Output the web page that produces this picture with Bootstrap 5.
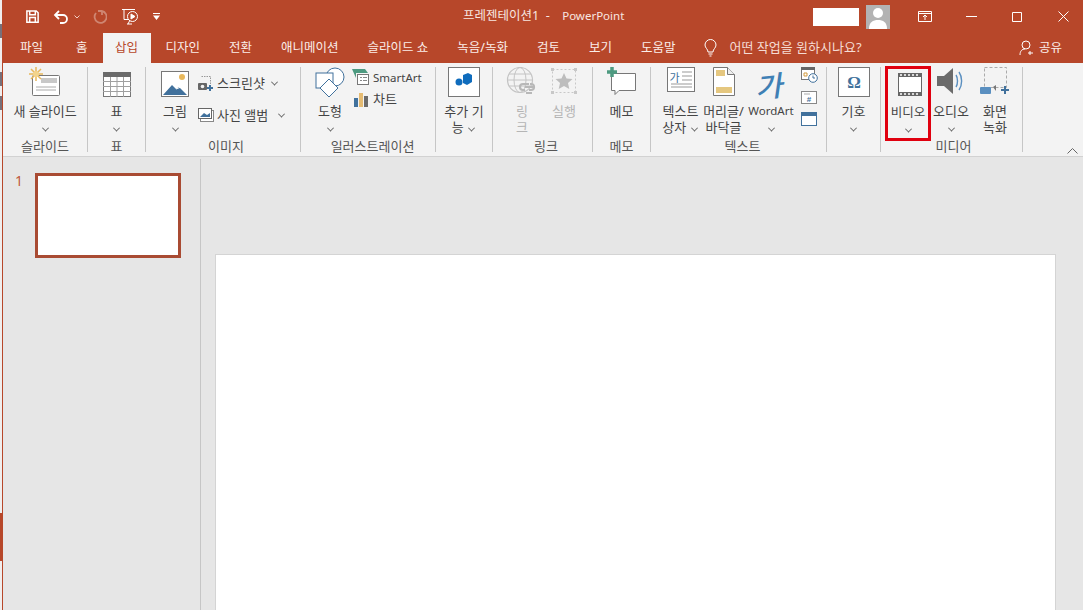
<!DOCTYPE html>
<html lang="ko">
<head>
  <meta charset="UTF-8" />
  <title>프레젠테이션1 - PowerPoint</title>
  <link href="https://cdn.jsdelivr.net/npm/bootstrap@5.3.0/dist/css/bootstrap.min.css" rel="stylesheet" />
  <style>
    html, body { height: 610px; overflow: hidden; }
    body { background: #f0eeee; font-family: "Noto Sans", "Noto Sans CJK KR", sans-serif; font-size: 13px; color: #444; }
    svg { display: block; }
    .bg-strip { width: 2px; height: 610px; flex: none; }
    .spot { height: 14px; margin-bottom: 10px; background: #77707a; }
    .spot-red { height: 48px; background: #b7472a; margin-top: 393px; }
    .app-frame { height: 610px; flex: 1; min-width: 0; background: #e6e6e6; border-left: 1px solid #b7472a; }
    .latin-text { font-size: 11.5px; }
    .title-row { height: 33px; flex: none; background: #b7472a; color: #fff; position: relative; }
    .qat { padding-left: 22px; }
    .qat-slot { width: 28px; }
    .qat-undo { width: 40px; }
    .qat-show { width: 32px; }
    .doc-title { position: absolute; left: 460px; top: 7px; font-size: 12.5px; line-height: 17px; color: #f7e6e0; white-space: pre; }
    .doc-title .latin-text { margin-left: 6px; }
    .account-box { width: 46px; height: 18px; background: #fff; }
    .avatar { width: 24px; height: 24px; background: #b3b3b3; margin-left: 7px; margin-right: 12px; }
    .win-btn { width: 46px; }
    .win-last { width: 40px; margin-left: 3px; }
    .tab-row { height: 30px; flex: none; background: #b7472a; padding-left: 3px; font-size: 12.5px; color: #fbeee9; }
    .rib-tab { padding: 0 14px; line-height: 30px; margin-right: 1px; white-space: nowrap; }
    .first-tab { margin-right: 5px; }
    .rib-tab-on { background: #f3f3f3; color: #b7472a; padding: 0 12.5px; margin-right: 1px; }
    .tell-me { margin-left: 13px; gap: 13px; color: #f5dcd4; font-size: 13px; }
    .share-link { margin-right: 21px; gap: 4px; color: #fbeee9; }
    .ribbon { height: 94px; flex: none; background: #f3f3f3; border-bottom: 1px solid #d2d2d2; padding-top: 4px; position: relative; }
    .rb-group { height: 85px; border-right: 1px solid #c6c6c6; flex: none; }
    .rb-items { height: 72px; }
    .rb-name { height: 13px; line-height: 14px; text-align: center; font-size: 13px; color: #555; white-space: nowrap; }
    .rb-btn { flex: none; line-height: 16px; text-align: center; color: #444; white-space: nowrap; }
    .rb-icon { height: 36px; }
    .wordart-glyph { font-family: "Noto Sans CJK KR", sans-serif; font-size: 29px; font-weight: 500; line-height: 34px; color: #3f80b5; transform: skewX(-14deg) rotate(-6deg); }
    .chev { display: inline-block; width: 5px; height: 5px; border: solid #666; border-width: 0 1px 1px 0; transform: rotate(45deg) translate(-1px, -1px); margin: 0 2px; }
    .rb-small { line-height: 16px; white-space: nowrap; gap: 3px; }
    .smart-col { margin-left: 2px; padding-top: 2px; }
    .chart-row { margin-top: 5px; }
    .dim-label { color: #b5b5b5; }
    .video-on { border: 3px solid #e0000f; height: 75px; margin-top: -1px; font-size: 12.5px; }
    .collapse-btn { position: absolute; right: 5px; bottom: 2px; }
    .g-w1 { width: 85px; } .g-w2 { width: 58px; } .g-w3 { width: 155px; padding-left: 6px; }
    .g-w4 { width: 135px; padding-left: 9px; } .g-w5 { width: 57px; } .g-w6 { width: 100px; padding-left: 7px; }
    .g-w7 { width: 58px; } .g-w8 { width: 176px; padding-left: 8px; } .g-w9 { width: 54px; } .g-w10 { width: 142px; padding-left: 4px; }
    .b-40 { width: 40px; } .b-42 { width: 43px; } .b-44 { width: 44px; } .b-46 { width: 46px; } .b-52 { width: 52px; } .b-full { width: 100%; }
    .main-row { min-height: 0; }
    .thumb-pane { width: 198px; border-right: 1px solid #c6c6c6; flex: none; margin-top: 2px; padding: 14px 0 0 12px; }
    .thumb-num { width: 20px; color: #c0583c; font-size: 14px; line-height: 16px; }
    .thumb-slide { width: 146px; height: 85px; background: #fff; border: 3px solid #a94b33; }
    .edit-area { flex: 1; padding: 97px 0 0 14px; overflow: hidden; }
    .slide-page { width: 841px; height: 400px; background: #fff; border: 1px solid #d4d4d4; }
  </style>
</head>
<body class="d-flex">
  <div class="bg-strip d-flex flex-column">
    <div class="spot mt-4"></div>
    <div class="spot mt-4"></div>
    <div class="spot"></div>
    <div class="spot-red"></div>
  </div>
  <div class="app-frame d-flex flex-column">
    <div class="title-row d-flex align-items-center">
      <div class="qat d-flex align-items-center">
        <div class="qat-slot">
          <svg width="15" height="15" viewBox="0 0 16 16" fill="none" stroke="#fff" stroke-width="1.600"><path d="M2 2h10l2 2v10H2z"/><path d="M5 2v4h6V2M5 14V9h6v5"/></svg>
        </div>
        <div class="qat-undo d-flex align-items-center">
          <svg width="17" height="14" viewBox="0 0 17 14" fill="none" stroke="#fff" stroke-width="1.800"><path d="M6 1 2 5l4 4"/><path d="M2 5h8a4 4 0 0 1 0 8H7"/></svg>
          <svg class="ms-1" width="6" height="4" viewBox="0 0 6 4" fill="none" stroke="#f2cfc4"><path d="m.5.5 2.500 2.500L5.500.5"/></svg>
        </div>
        <div class="qat-slot">
          <svg width="14" height="14" viewBox="0 0 14 14" fill="none" stroke="#cf8672" stroke-width="1.800"><path d="M9 1a6 6 0 1 1-6 2"/><path d="M9 1v4M9 1H5"/></svg>
        </div>
        <div class="qat-show">
          <svg width="18" height="17" viewBox="0 0 18 17" fill="none" stroke="#fff"><path d="M1 1.500h13M3 1.500v10h5M9 12l-2 4M6 16h5"/><circle cx="11.500" cy="8.500" r="5"/><path d="M10 6v5l4-2.500z" fill="#fff"/></svg>
        </div>
        <svg width="7" height="7" viewBox="0 0 7 7" fill="#fff"><path d="M0 0h7v1H0zM0 2.500h7L3.500 7z"/></svg>
      </div>
      <div class="doc-title">프레젠테이션1  -  <span class="latin-text">PowerPoint</span></div>
      <div class="ms-auto d-flex align-items-center">
        <div class="account-box"></div>
        <div class="avatar d-flex">
          <svg width="24" height="24" viewBox="0 0 24 24" fill="#fff"><circle cx="12" cy="8" r="5"/><path d="M3 24c0-7 4-9 9-9s9 2 9 9z"/></svg>
        </div>
        <div class="win-btn d-flex justify-content-center">
          <svg width="14" height="11" viewBox="0 0 14 11" fill="none" stroke="#fff"><path d="M.5.500h13v10H.500zM.5 2.500h13M7 9V4.500M5 6l2-2 2 2"/></svg>
        </div>
        <div class="win-btn d-flex justify-content-center">
          <svg width="11" height="1" viewBox="0 0 11 1"><path d="M0 0h11v1H0z" fill="#fff"/></svg>
        </div>
        <div class="win-btn d-flex justify-content-center">
          <svg width="10" height="10" viewBox="0 0 10 10" fill="none" stroke="#fff"><path d="M.5.500h9v9h-9z"/></svg>
        </div>
        <div class="win-last d-flex justify-content-center">
          <svg width="11" height="11" viewBox="0 0 11 11" fill="none" stroke="#fff"><path d="m.5.500 10 10M10.500.500l-10 10"/></svg>
        </div>
      </div>
    </div>

    <div class="tab-row d-flex align-items-center">
      <div class="rib-tab first-tab">파일</div>
      <div class="rib-tab">홈</div>
      <div class="rib-tab rib-tab-on">삽입</div>
      <div class="rib-tab">디자인</div>
      <div class="rib-tab">전환</div>
      <div class="rib-tab">애니메이션</div>
      <div class="rib-tab">슬라이드 쇼</div>
      <div class="rib-tab">녹음/녹화</div>
      <div class="rib-tab">검토</div>
      <div class="rib-tab">보기</div>
      <div class="rib-tab">도움말</div>
      <div class="tell-me d-flex align-items-center">
        <svg width="13" height="18" viewBox="0 0 13 18" fill="none" stroke="#fff"><path d="M4 13c0-3-3-4-3-7a5.500 5.500 0 0 1 11 0c0 3-3 4-3 7zM4.500 15h4M5.500 17h2"/></svg>
        <span>어떤 작업을 원하시나요?</span>
      </div>
      <div class="share-link ms-auto d-flex align-items-center">
        <svg width="16" height="16" viewBox="0 0 16 16" fill="none" stroke="#fff"><circle cx="7" cy="5" r="4"/><path d="M1 15c0-4 2-6 5-6M11 11v4M9 13h5"/></svg>
        <span>공유</span>
      </div>
    </div>

    <div class="ribbon d-flex">
      <div class="rb-group g-w1 d-flex flex-column">
        <div class="rb-items d-flex">
          <div class="rb-btn b-full">
            <div class="rb-icon d-flex justify-content-center">
              <svg width="32" height="30" viewBox="0 0 32 30"><rect x="3.500" y="8.500" width="27" height="20" rx="1" fill="#fff" stroke="#777"/><rect x="12" y="11" width="16" height="5" fill="#c8c8c8"/><path d="M7 20h20M7 23h20" stroke="#aaa"/><path d="M7 0v14M0 7h14M2 2l10 10M12 2 2 12" stroke="#e8b85c" stroke-width="1.500"/><circle cx="7" cy="7" r="3" fill="#f3d48c"/></svg>
            </div>
            <div>새 슬라이드</div>
            <div><span class="chev"></span></div>
          </div>
        </div>
        <div class="rb-name">슬라이드</div>
      </div>

      <div class="rb-group g-w2 d-flex flex-column">
        <div class="rb-items d-flex">
          <div class="rb-btn b-full">
            <div class="rb-icon d-flex justify-content-center">
              <svg width="28" height="30" viewBox="0 0 28 30"><rect x=".5" y="5.500" width="27" height="24" fill="#fff" stroke="#777"/><rect y="5" width="28" height="5" fill="#6b6b6b"/><path d="M0 14.500h28M0 19.500h28M0 24.500h28M7.500 10v20M14 10v20M20.500 10v20" stroke="#a0a0a0"/></svg>
            </div>
            <div>표</div>
            <div><span class="chev"></span></div>
          </div>
        </div>
        <div class="rb-name">표</div>
      </div>

      <div class="rb-group g-w3 d-flex flex-column">
        <div class="rb-items d-flex">
          <div class="rb-btn b-46">
            <div class="rb-icon d-flex justify-content-center">
              <svg width="28" height="30" viewBox="0 0 28 30"><rect x=".5" y="4.500" width="27" height="25" fill="#fff" stroke="#777"/><circle cx="21" cy="10" r="3" fill="#e8b85c"/><path d="M2 28 11 18l4 4 3-2 8 8z" fill="#41719c"/><path d="m15 22 5-2 6 6" stroke="#fff" fill="none"/></svg>
            </div>
            <div>그림</div>
            <div><span class="chev"></span></div>
          </div>
          <div class="d-flex flex-column">
            <div class="rb-small d-flex align-items-center mt-2">
              <svg width="16" height="16" viewBox="0 0 16 16" fill="none"><path d="M3.500 1.500h9v8" stroke="#999" stroke-dasharray="1.500 1"/><rect x="0" y="8" width="9" height="7" rx="1" fill="#666"/><circle cx="4.500" cy="11.500" r="1.800" fill="#f3f3f3"/><path d="M12 10v6M9 13h6" stroke="#41719c" stroke-width="2"/></svg>
              <span>스크린샷</span><span class="chev ms-1"></span>
            </div>
            <div class="rb-small d-flex align-items-center mt-3">
              <svg width="16" height="16" viewBox="0 0 16 16" fill="none"><rect x="2.500" y="3.500" width="13" height="11" fill="#fff" stroke="#888"/><rect x=".5" y="1.500" width="13" height="10" fill="#fff" stroke="#666"/><path d="M2 10 6 6l3 2 3-2v4z" fill="#41719c"/></svg>
              <span>사진 앨범</span><span class="chev ms-2"></span>
            </div>
          </div>
        </div>
        <div class="rb-name">이미지</div>
      </div>

      <div class="rb-group g-w4 d-flex flex-column">
        <div class="rb-items d-flex">
          <div class="rb-btn b-40">
            <div class="rb-icon d-flex justify-content-center">
              <svg width="30" height="32" viewBox="0 0 30 32" fill="#fff" stroke="#41719c"><circle cx="20" cy="10" r="9"/><rect x="1" y="6" width="17" height="15"/><path d="m14 12 9 9-9 9-9-9z"/></svg>
            </div>
            <div>도형</div>
            <div><span class="chev"></span></div>
          </div>
          <div class="smart-col d-flex flex-column">
            <div class="rb-small d-flex align-items-center">
              <svg width="18" height="17" viewBox="0 0 18 17"><rect x="5.500" y="5.500" width="11" height="10" fill="#fff" stroke="#777"/><path d="M8 8.500h2M8 11.500h2M11 8.500h4M11 11.500h4" stroke="#888"/><path d="M0 0h13l3 4H4v5z" fill="#4d9a80"/></svg>
              <span class="latin-text">SmartArt</span>
            </div>
            <div class="rb-small chart-row d-flex align-items-center">
              <svg width="18" height="15" viewBox="0 0 18 15"><rect x="2" y="6" width="4" height="9" fill="#41719c"/><rect x="7" y="1" width="4" height="14" fill="#e5bb72"/><rect x="12" y="4" width="4" height="11" fill="#6b6b6b"/></svg>
              <span>차트</span>
            </div>
          </div>
        </div>
        <div class="rb-name">일러스트레이션</div>
      </div>

      <div class="rb-group g-w5 d-flex flex-column">
        <div class="rb-items d-flex">
          <div class="rb-btn b-full">
            <div class="rb-icon d-flex justify-content-center">
              <svg width="32" height="30" viewBox="0 0 32 30"><rect x=".5" y=".5" width="31" height="29" fill="#fff" stroke="#777"/><path d="M15 8l5-2 4 2v7l-5 3-4-2z" fill="#0f6cbd"/><circle cx="11" cy="15" r="3.500" fill="#0f6cbd"/></svg>
            </div>
            <div>추가 기</div>
            <div>능 <span class="chev"></span></div>
          </div>
        </div>
        <div class="rb-name"></div>
      </div>

      <div class="rb-group g-w6 d-flex flex-column">
        <div class="rb-items d-flex">
          <div class="rb-btn b-44">
            <div class="rb-icon d-flex justify-content-center">
              <svg width="32" height="32" viewBox="0 0 32 32" fill="none" stroke="#c4c4c4"><circle cx="14" cy="13" r="12.500" stroke-width="1.200"/><ellipse cx="14" cy="13" rx="6" ry="12.500"/><path d="M1.500 13h25M3 7h22M3 19h22"/><path d="M19 23h-2a3 3 0 0 1 0-6h6M23 23h2a3 3 0 0 0 0-6h-1M19 20h8M20 26h6" stroke-width="2.200" stroke="#b8b8b8"/></svg>
            </div>
            <div class="dim-label">링</div>
            <div class="dim-label">크</div>
          </div>
          <div class="rb-btn b-40">
            <div class="rb-icon d-flex justify-content-center">
              <svg width="26" height="28" viewBox="0 0 26 28"><rect x="1.500" y="2.500" width="23" height="23" fill="none" stroke="#c8c8c8" stroke-dasharray="2 2"/><path d="M0 1h3v3H0zM23 1h3v3h-3zM0 24h3v3H0zM23 24h3v3h-3z" fill="#c8c8c8"/><path d="m13 6 2.500 5.500 6 .6-4.500 4 1.300 6-5.300-3-5.300 3 1.300-6-4.500-4 6-.6z" fill="#bdbdbd"/></svg>
            </div>
            <div class="dim-label">실행</div>
          </div>
        </div>
        <div class="rb-name">링크</div>
      </div>

      <div class="rb-group g-w7 d-flex flex-column">
        <div class="rb-items d-flex">
          <div class="rb-btn b-full">
            <div class="rb-icon d-flex justify-content-center">
              <svg width="30" height="30" viewBox="0 0 30 30"><path d="M4.500 6.500h24v17H12l-4 4v-4H4.500z" fill="#fff" stroke="#777" stroke-linejoin="round"/><path d="M5 0v10M0 5h10" stroke="#4d9a80" stroke-width="3.500"/></svg>
            </div>
            <div>메모</div>
          </div>
        </div>
        <div class="rb-name">메모</div>
      </div>

      <div class="rb-group g-w8 d-flex flex-column">
        <div class="rb-items d-flex">
          <div class="rb-btn b-42">
            <div class="rb-icon d-flex justify-content-center">
              <svg width="28" height="26" viewBox="0 0 28 26"><rect x=".5" y=".5" width="27" height="24" fill="#fff" stroke="#777"/><text x="2.500" y="15" font-size="11" fill="#41719c" font-family="Noto Sans CJK KR">가</text><path d="M15 5h10M15 9h10M15 13h10M4 17h21M4 20h21" stroke="#999"/></svg>
            </div>
            <div>텍스트</div>
            <div>상자 <span class="chev"></span></div>
          </div>
          <div class="rb-btn b-42">
            <div class="rb-icon d-flex justify-content-center">
              <svg width="22" height="29" viewBox="0 0 22 29"><path d="M.5.500h14l7 7v21H.500z" fill="#fff" stroke="#777"/><path d="M14.500.5v7h7" fill="#eee" stroke="#777"/><rect x="3" y="3" width="9" height="6" fill="#e5c77f"/><rect x="3" y="20" width="16" height="6" fill="#e5c77f"/></svg>
            </div>
            <div>머리글/</div>
            <div>바닥글</div>
          </div>
          <div class="rb-btn b-52">
            <div class="rb-icon d-flex justify-content-center">
              <span class="wordart-glyph">가</span>
            </div>
            <div class="latin-text">WordArt</div>
            <div><span class="chev"></span></div>
          </div>
          <div class="d-flex flex-column gap-2 ms-1">
            <svg width="17" height="16" viewBox="0 0 17 16"><rect x=".5" y=".5" width="13" height="12" fill="#fff" stroke="#777"/><rect width="14" height="3" fill="#666"/><path d="M3 6h3v3H3z" fill="none" stroke="#d19a3e"/><circle cx="12" cy="11" r="4.300" fill="#fff" stroke="#41719c"/><path d="M12 8.500V11h2" stroke="#41719c" fill="none"/></svg>
            <svg width="16" height="13" viewBox="0 0 16 13"><rect x=".5" y=".5" width="15" height="12" fill="#fff" stroke="#888"/><text x="8" y="10.500" text-anchor="middle" font-size="8" font-weight="700" fill="#41719c" font-family="Liberation Sans">#</text><path d="M3 3h6" stroke="#aaa"/></svg>
            <svg width="16" height="14" viewBox="0 0 16 14"><rect x=".5" y=".5" width="15" height="13" fill="#fff" stroke="#41719c"/><rect width="16" height="4" fill="#41719c"/></svg>
          </div>
        </div>
        <div class="rb-name">텍스트</div>
      </div>

      <div class="rb-group g-w9 d-flex flex-column">
        <div class="rb-items d-flex">
          <div class="rb-btn b-full">
            <div class="rb-icon d-flex justify-content-center">
              <svg width="32" height="30" viewBox="0 0 32 30"><rect x=".5" y=".5" width="31" height="29" fill="#fff" stroke="#777"/><text x="16" y="21" text-anchor="middle" font-size="17" font-weight="700" fill="#41719c" font-family="Liberation Serif">Ω</text></svg>
            </div>
            <div>기호</div>
            <div><span class="chev"></span></div>
          </div>
        </div>
        <div class="rb-name"></div>
      </div>

      <div class="rb-group g-w10 d-flex flex-column">
        <div class="rb-items d-flex">
          <div class="rb-btn b-46 video-on">
            <div class="rb-icon d-flex justify-content-center">
              <svg class="ms-1" width="24" height="28" viewBox="0 0 24 28"><g transform="translate(0 3)"><rect x=".5" y="1.500" width="23" height="22" fill="#fff" stroke="#666"/><path d="M0 1h24v4H0zM0 20h24v4H0z" fill="#666"/><path d="M2 3h2M6 3h2M10 3h2M14 3h2M18 3h2M2 22h2M6 22h2M10 22h2M14 22h2M18 22h2" stroke="#fff" stroke-width="1.500"/></g></svg>
            </div>
            <div>비디오</div>
            <div><span class="chev"></span></div>
          </div>
          <div class="rb-btn b-40">
            <div class="rb-icon d-flex justify-content-center">
              <svg width="28" height="28" viewBox="0 0 28 28"><path d="M0 9h7l9-8v26l-9-8H0z" fill="#6b6b6b"/><path d="M19 8c2 3 2 9 0 12M22 5c3.500 5 3.500 13 0 18" fill="none" stroke="#5a8fc0" stroke-width="1.400"/></svg>
            </div>
            <div>오디오</div>
            <div><span class="chev"></span></div>
          </div>
          <div class="rb-btn b-40 ms-1">
            <div class="rb-icon d-flex justify-content-center">
              <svg width="30" height="28" viewBox="0 0 30 28" fill="none"><rect x="4.500" y=".5" width="22" height="20" stroke="#aaa" stroke-dasharray="3 2"/><rect x="0" y="20" width="11" height="7" rx="1" fill="#5a8fc0"/><path d="M13 20l3-2v6z" fill="#777"/><path d="M25 19v8M21 23h8" stroke="#41719c" stroke-width="2"/></svg>
            </div>
            <div>화면</div>
            <div>녹화</div>
          </div>
        </div>
        <div class="rb-name">미디어</div>
      </div>

      <div class="collapse-btn">
        <svg width="11" height="6" viewBox="0 0 11 6" fill="none" stroke="#666"><path d="m.5 5.500 5-5 5 5"/></svg>
      </div>
    </div>

    <div class="main-row d-flex flex-grow-1">
      <div class="thumb-pane d-flex">
        <div class="thumb-num">1</div>
        <div class="thumb-slide"></div>
      </div>
      <div class="edit-area">
        <div class="slide-page"></div>
      </div>
    </div>
  </div>
  <script src="https://cdn.jsdelivr.net/npm/bootstrap@5.3.0/dist/js/bootstrap.bundle.min.js"></script>
</body>
</html>
